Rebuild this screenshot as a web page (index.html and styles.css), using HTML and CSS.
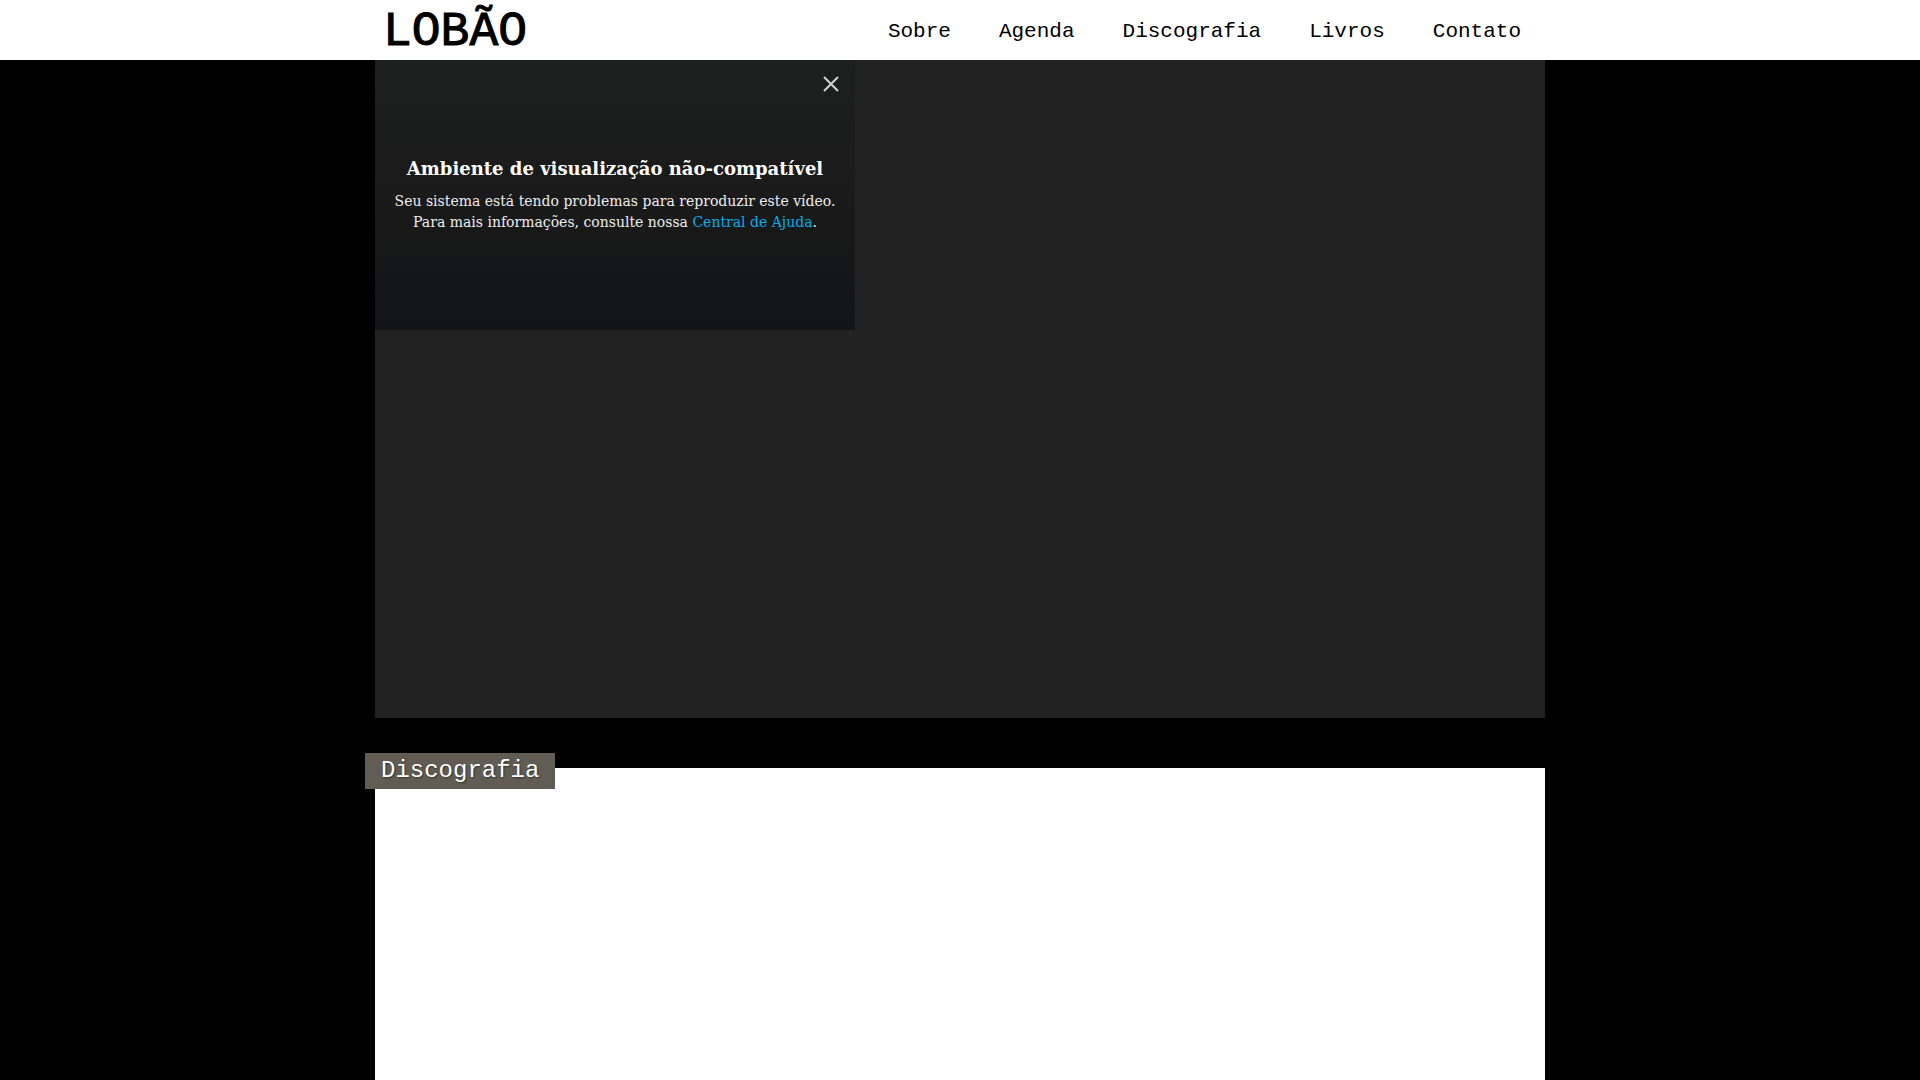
FILE: index.html
```html
<!DOCTYPE html>
<html lang="pt-BR">
<head>
  <meta charset="utf-8">
  <meta name="viewport" content="width=device-width, initial-scale=1">
  <title>Lobão</title>
  <link rel="stylesheet" href="styles.css">
</head>
<body>
  <header class="topbar">
    <div class="container topbar-inner">
      <a class="logo" href="#">LOBÃO</a>
      <nav class="menu">
        <a href="#sobre">Sobre</a>
        <a href="#agenda">Agenda</a>
        <a href="#discografia">Discografia</a>
        <a href="#livros">Livros</a>
        <a href="#contato">Contato</a>
      </nav>
    </div>
  </header>
  <main class="container content">
    <section class="hero">
      <div class="player">
        <button class="close" type="button" aria-label="Fechar">
          <svg viewBox="0 0 16 16" width="16" height="16" aria-hidden="true"><path d="M1 1L15 15M15 1L1 15" stroke="#d2d2d2" stroke-width="2" fill="none"/></svg>
        </button>
        <h1>Ambiente de visualização não-compatível</h1>
        <p>Seu sistema está tendo problemas para reproduzir este vídeo. Para mais informações, consulte nossa <a href="#ajuda">Central de Ajuda</a>.</p>
      </div>
    </section>
    <section class="panel" id="discografia">
      <h2>Discografia</h2>
    </section>
  </main>
</body>
</html>
```
FILE: styles.css
```css
* {
  box-sizing: border-box;
}

body {
  display: flex;
  flex-direction: column;
  min-height: 100vh;
  margin: 0;
  background: #000;
  font-family: "Liberation Mono", monospace;
}

a {
  text-decoration: none;
}

.container {
  width: 100%;
  max-width: 1170px;
  margin: 0 auto;
}

.topbar {
  background: #fff;
}

.topbar-inner {
  display: flex;
  align-items: center;
  justify-content: space-between;
  min-height: 60px;
}

.logo {
  padding: 4px 0 0 8px;
  color: #000;
  font-size: 48px;
  line-height: 56px;
  -webkit-text-stroke: 1px #000;
}

.menu {
  display: flex;
  flex-wrap: wrap;
}

.menu a {
  padding: 4px 24px 0;
  color: #000;
  font-size: 21px;
  line-height: 56px;
}

.content {
  display: flex;
  flex: 1;
  flex-direction: column;
  gap: 50px;
}

.hero {
  aspect-ratio: 16 / 9;
  background: #222;
}

.player {
  position: relative;
  width: 100%;
  max-width: 480px;
  min-height: 270px;
  padding: 96px 16px 0;
  background: linear-gradient(#1e1f1f, #1a1a1a 50%, #131416);
  color: #fff;
  font-family: "DejaVu Serif", serif;
  text-align: center;
}

.player h1 {
  margin: 0 0 9px;
  font-size: 18px;
  line-height: 26px;
}

.player p {
  margin: 0;
  color: #eee;
  font-size: 14px;
  line-height: 21px;
}

.player a {
  color: #00adef;
}

.close {
  position: absolute;
  top: 8px;
  right: 8px;
  display: flex;
  align-items: center;
  justify-content: center;
  width: 32px;
  height: 32px;
  padding: 0;
  border: 0;
  background: none;
}

.panel {
  display: flex;
  flex: 1;
  align-items: flex-start;
  background: #fff;
}

.panel h2 {
  margin: -15px 0 0 -10px;
  padding: 0 16px;
  background: #625d54;
  color: #fff;
  font-size: 24px;
  font-weight: 400;
  line-height: 36px;
  text-shadow: 1px 1px 2px #333;
}
```
